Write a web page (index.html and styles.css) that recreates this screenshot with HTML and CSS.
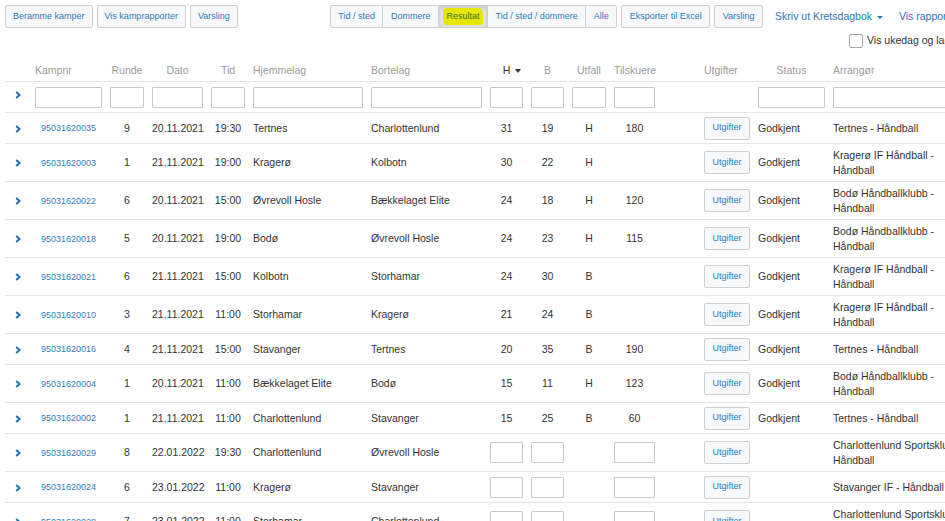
FILE: index.html
```html
<!DOCTYPE html>
<html lang="no">
<head>
<meta charset="utf-8">
<title>Kamper</title>
<link rel="stylesheet" href="styles.css">
</head>
<body>
<div class="page">
  <div class="toolbar">
    <div class="btn-row first">
      <button class="btn">Beramme kamper</button>
      <button class="btn">Vis kamprapporter</button>
      <button class="btn">Varsling</button>
    </div>
    <div class="btn-group">
      <button class="btn">Tid / sted</button>
      <button class="btn">Dommere</button>
      <button class="btn active"><span class="hl">Resultat</span></button>
      <button class="btn">Tid / sted / dommere</button>
      <button class="btn">Alle</button>
    </div>
    <div class="btn-row">
      <button class="btn">Eksporter til Excel</button>
      <button class="btn">Varsling</button>
    </div>
    <a class="nav-link" href="#">Skriv ut Kretsdagbok <span class="caret"></span></a>
    <a class="nav-link second" href="#">Vis rapporter</a>
  </div>
  <div class="options">
    <label class="check"><span class="box"></span>Vis ukedag og lagnavn</label>
  </div>

  <table class="grid">
    <colgroup>
      <col class="w-exp"><col class="w-nr"><col class="w-runde"><col class="w-dato"><col class="w-tid">
      <col class="w-hjem"><col class="w-bort"><col class="w-h"><col class="w-b"><col class="w-utfall">
      <col class="w-tilsk"><col class="w-spacer"><col class="w-utg"><col class="w-status"><col class="w-arr">
    </colgroup>
    <thead>
      <tr class="head">
        <th></th>
        <th class="l">Kampnr</th>
        <th>Runde</th>
        <th>Dato</th>
        <th>Tid</th>
        <th class="l">Hjemmelag</th>
        <th class="l">Bortelag</th>
        <th class="sorted">H<span class="sort-caret"></span></th>
        <th>B</th>
        <th>Utfall</th>
        <th>Tilskuere</th>
        <th></th>
        <th class="l">Utgifter</th>
        <th>Status</th>
        <th class="l">Arrangør</th>
      </tr>
      <tr class="filters">
        <td class="exp"><svg class="chev" viewBox="0 0 6 8" width="6" height="8"><polyline points="1.2,1 4.6,4 1.2,7" /></svg></td>
        <td><input class="field" type="text"></td>
        <td><input class="field" type="text"></td>
        <td><input class="field" type="text"></td>
        <td><input class="field" type="text"></td>
        <td><input class="field" type="text"></td>
        <td><input class="field" type="text"></td>
        <td><input class="field" type="text"></td>
        <td><input class="field" type="text"></td>
        <td><input class="field" type="text"></td>
        <td><input class="field" type="text"></td>
        <td></td>
        <td></td>
        <td><input class="field" type="text"></td>
        <td><input class="field" type="text"></td>
      </tr>
    </thead>
    <tbody>
      <tr>
        <td class="exp"><svg class="chev" viewBox="0 0 6 8" width="6" height="8"><polyline points="1.2,1 4.6,4 1.2,7" /></svg></td>
        <td class="c"><a class="nr" href="#">95031620035</a></td>
        <td class="c">9</td><td class="c">20.11.2021</td><td class="c">19:30</td>
        <td>Tertnes</td><td>Charlottenlund</td>
        <td class="c">31</td><td class="c">19</td><td class="c">H</td><td class="c">180</td><td></td>
        <td><button class="btn">Utgifter</button></td><td>Godkjent</td><td>Tertnes - Håndball</td>
      </tr>
      <tr>
        <td class="exp"><svg class="chev" viewBox="0 0 6 8" width="6" height="8"><polyline points="1.2,1 4.6,4 1.2,7" /></svg></td>
        <td class="c"><a class="nr" href="#">95031620003</a></td>
        <td class="c">1</td><td class="c">21.11.2021</td><td class="c">19:00</td>
        <td>Kragerø</td><td>Kolbotn</td>
        <td class="c">30</td><td class="c">22</td><td class="c">H</td><td class="c"></td><td></td>
        <td><button class="btn">Utgifter</button></td><td>Godkjent</td><td>Kragerø IF Håndball - Håndball</td>
      </tr>
      <tr>
        <td class="exp"><svg class="chev" viewBox="0 0 6 8" width="6" height="8"><polyline points="1.2,1 4.6,4 1.2,7" /></svg></td>
        <td class="c"><a class="nr" href="#">95031620022</a></td>
        <td class="c">6</td><td class="c">20.11.2021</td><td class="c">15:00</td>
        <td>Øvrevoll Hosle</td><td>Bækkelaget Elite</td>
        <td class="c">24</td><td class="c">18</td><td class="c">H</td><td class="c">120</td><td></td>
        <td><button class="btn">Utgifter</button></td><td>Godkjent</td><td>Bodø Håndballklubb - Håndball</td>
      </tr>
      <tr>
        <td class="exp"><svg class="chev" viewBox="0 0 6 8" width="6" height="8"><polyline points="1.2,1 4.6,4 1.2,7" /></svg></td>
        <td class="c"><a class="nr" href="#">95031620018</a></td>
        <td class="c">5</td><td class="c">20.11.2021</td><td class="c">19:00</td>
        <td>Bodø</td><td>Øvrevoll Hosle</td>
        <td class="c">24</td><td class="c">23</td><td class="c">H</td><td class="c">115</td><td></td>
        <td><button class="btn">Utgifter</button></td><td>Godkjent</td><td>Bodø Håndballklubb - Håndball</td>
      </tr>
      <tr>
        <td class="exp"><svg class="chev" viewBox="0 0 6 8" width="6" height="8"><polyline points="1.2,1 4.6,4 1.2,7" /></svg></td>
        <td class="c"><a class="nr" href="#">95031620021</a></td>
        <td class="c">6</td><td class="c">21.11.2021</td><td class="c">15:00</td>
        <td>Kolbotn</td><td>Storhamar</td>
        <td class="c">24</td><td class="c">30</td><td class="c">B</td><td class="c"></td><td></td>
        <td><button class="btn">Utgifter</button></td><td>Godkjent</td><td>Kragerø IF Håndball - Håndball</td>
      </tr>
      <tr>
        <td class="exp"><svg class="chev" viewBox="0 0 6 8" width="6" height="8"><polyline points="1.2,1 4.6,4 1.2,7" /></svg></td>
        <td class="c"><a class="nr" href="#">95031620010</a></td>
        <td class="c">3</td><td class="c">21.11.2021</td><td class="c">11:00</td>
        <td>Storhamar</td><td>Kragerø</td>
        <td class="c">21</td><td class="c">24</td><td class="c">B</td><td class="c"></td><td></td>
        <td><button class="btn">Utgifter</button></td><td>Godkjent</td><td>Kragerø IF Håndball - Håndball</td>
      </tr>
      <tr>
        <td class="exp"><svg class="chev" viewBox="0 0 6 8" width="6" height="8"><polyline points="1.2,1 4.6,4 1.2,7" /></svg></td>
        <td class="c"><a class="nr" href="#">95031620016</a></td>
        <td class="c">4</td><td class="c">21.11.2021</td><td class="c">15:00</td>
        <td>Stavanger</td><td>Tertnes</td>
        <td class="c">20</td><td class="c">35</td><td class="c">B</td><td class="c">190</td><td></td>
        <td><button class="btn">Utgifter</button></td><td>Godkjent</td><td>Tertnes - Håndball</td>
      </tr>
      <tr>
        <td class="exp"><svg class="chev" viewBox="0 0 6 8" width="6" height="8"><polyline points="1.2,1 4.6,4 1.2,7" /></svg></td>
        <td class="c"><a class="nr" href="#">95031620004</a></td>
        <td class="c">1</td><td class="c">20.11.2021</td><td class="c">11:00</td>
        <td>Bækkelaget Elite</td><td>Bodø</td>
        <td class="c">15</td><td class="c">11</td><td class="c">H</td><td class="c">123</td><td></td>
        <td><button class="btn">Utgifter</button></td><td>Godkjent</td><td>Bodø Håndballklubb - Håndball</td>
      </tr>
      <tr>
        <td class="exp"><svg class="chev" viewBox="0 0 6 8" width="6" height="8"><polyline points="1.2,1 4.6,4 1.2,7" /></svg></td>
        <td class="c"><a class="nr" href="#">95031620002</a></td>
        <td class="c">1</td><td class="c">21.11.2021</td><td class="c">11:00</td>
        <td>Charlottenlund</td><td>Stavanger</td>
        <td class="c">15</td><td class="c">25</td><td class="c">B</td><td class="c">60</td><td></td>
        <td><button class="btn">Utgifter</button></td><td>Godkjent</td><td>Tertnes - Håndball</td>
      </tr>
      <tr>
        <td class="exp"><svg class="chev" viewBox="0 0 6 8" width="6" height="8"><polyline points="1.2,1 4.6,4 1.2,7" /></svg></td>
        <td class="c"><a class="nr" href="#">95031620029</a></td>
        <td class="c">8</td><td class="c">22.01.2022</td><td class="c">19:30</td>
        <td>Charlottenlund</td><td>Øvrevoll Hosle</td>
        <td><input class="field" type="text"></td><td><input class="field" type="text"></td><td></td><td><input class="field" type="text"></td><td></td>
        <td><button class="btn">Utgifter</button></td><td></td><td>Charlottenlund Sportsklubb - Håndball</td>
      </tr>
      <tr>
        <td class="exp"><svg class="chev" viewBox="0 0 6 8" width="6" height="8"><polyline points="1.2,1 4.6,4 1.2,7" /></svg></td>
        <td class="c"><a class="nr" href="#">95031620024</a></td>
        <td class="c">6</td><td class="c">23.01.2022</td><td class="c">11:00</td>
        <td>Kragerø</td><td>Stavanger</td>
        <td><input class="field" type="text"></td><td><input class="field" type="text"></td><td></td><td><input class="field" type="text"></td><td></td>
        <td><button class="btn">Utgifter</button></td><td></td><td>Stavanger IF - Håndball</td>
      </tr>
      <tr>
        <td class="exp"><svg class="chev" viewBox="0 0 6 8" width="6" height="8"><polyline points="1.2,1 4.6,4 1.2,7" /></svg></td>
        <td class="c"><a class="nr" href="#">95031620028</a></td>
        <td class="c">7</td><td class="c">23.01.2022</td><td class="c">11:00</td>
        <td>Storhamar</td><td>Charlottenlund</td>
        <td><input class="field" type="text"></td><td><input class="field" type="text"></td><td></td><td><input class="field" type="text"></td><td></td>
        <td><button class="btn">Utgifter</button></td><td></td><td>Charlottenlund Sportsklubb - Håndball</td>
      </tr>
    </tbody>
  </table>
</div>
</body>
</html>
```

FILE: styles.css
```css
html, body {
  margin: 0;
  padding: 0;
  overflow: hidden;
  background: #fff;
}

body {
  font-family: "Liberation Sans", Arial, sans-serif;
  font-size: 10.5px;
  line-height: 15px;
  color: #333;
}

.page {
  width: 1100px;
  padding: 5px 5px 0 5px;
}

/* ---------- toolbar ---------- */
.toolbar {
  display: flex;
  align-items: center;
  height: 23px;
}

.btn-row {
  display: flex;
  gap: 4px;
}

.btn {
  font-family: "Liberation Sans", Arial, sans-serif;
  font-size: 9px;
  line-height: 13.5px;
  padding: 3.75px 7.5px;
  border: 1px solid #cfcfcf;
  border-radius: 2px;
  background: #f6f8fa;
  color: #2c7bbb;
  cursor: pointer;
  white-space: nowrap;
}

.btn-row.first .btn {
  padding-left: 7px;
  padding-right: 7px;
}

.btn-group {
  display: flex;
  margin-left: 92px;
  margin-right: 4px;
}

.btn-group .btn {
  border-radius: 0;
  margin-left: -1px;
}

.btn-group .btn:first-child {
  margin-left: 0;
  border-radius: 2px 0 0 2px;
}

.btn-group .btn:last-child {
  border-radius: 0 2px 2px 0;
}

.btn.active {
  background: #e4e4e4;
  box-shadow: inset 0 2px 4px rgba(0, 0, 0, 0.13);
  padding-left: 4.5px;
  padding-right: 4.5px;
}

.hl {
  display: inline-block;
  background: #e6e60a;
  color: #3b7a12;
  padding: 2px 3px;
  margin: -2px 0;
  border-radius: 3px 5px 2px 4px;
}

.nav-link {
  font-size: 10.5px;
  color: #2d74b4;
  text-decoration: none;
  margin-left: 12px;
  white-space: nowrap;
}

.nav-link.second {
  margin-left: 16px;
}

.caret {
  display: inline-block;
  width: 0;
  height: 0;
  margin-left: 2px;
  vertical-align: middle;
  border-top: 3.5px solid #2d74b4;
  border-left: 3px solid transparent;
  border-right: 3px solid transparent;
}

/* ---------- options row ---------- */
.options {
  margin-top: 5px;
  padding-left: 844px;
  height: 15px;
}

.check {
  display: flex;
  align-items: center;
  white-space: nowrap;
  color: #333;
}

.box {
  display: inline-block;
  width: 12px;
  height: 12px;
  border: 1px solid #a9a9a9;
  border-radius: 2px;
  background: #fff;
  margin-right: 4px;
}

/* ---------- table ---------- */
.grid {
  margin-top: 11px;
  border-collapse: collapse;
  table-layout: fixed;
  width: 968px;
}

.w-exp { width: 26px; }
.w-nr { width: 75px; }
.w-runde { width: 42px; }
.w-dato { width: 59px; }
.w-tid { width: 42px; }
.w-hjem { width: 118px; }
.w-bort { width: 119px; }
.w-h { width: 41px; }
.w-b { width: 41px; }
.w-utfall { width: 42px; }
.w-tilsk { width: 49px; }
.w-spacer { width: 41px; }
.w-utg { width: 54px; }
.w-status { width: 75px; }
.w-arr { width: 144px; }

.grid th {
  font-weight: normal;
  color: #9a9a9a;
  text-align: center;
  padding: 3.5px 4px;
  white-space: nowrap;
  border-bottom: 1px solid #e3e3e3;
}

.grid th.l {
  text-align: left;
}

.grid th.sorted {
  color: #333;
  padding-left: 15px;
}

.sort-caret {
  display: inline-block;
  width: 0;
  height: 0;
  margin-left: 5px;
  vertical-align: middle;
  border-top: 4px solid #333;
  border-left: 3.5px solid transparent;
  border-right: 3.5px solid transparent;
}

.grid td {
  padding: 3.5px 4px;
  vertical-align: middle;
  border-bottom: 1px solid #e6e6e6;
}

.grid tr.filters td {
  padding-top: 4.5px;
  padding-bottom: 4.5px;
}

.grid td.c {
  text-align: center;
  white-space: nowrap;
}

.grid td.exp {
  text-align: center;
  padding-left: 2px;
  padding-right: 2px;
}

.filters td.exp {
  vertical-align: top;
  padding-top: 8px;
}

.chev {
  display: inline-block;
  vertical-align: middle;
}

.chev polyline {
  fill: none;
  stroke: #1d6fab;
  stroke-width: 1.9;
  stroke-linejoin: miter;
  stroke-linecap: butt;
}

.field {
  display: block;
  box-sizing: border-box;
  width: 100%;
  height: 21px;
  margin: 0;
  padding: 0 4px;
  border: 1px solid #c9c9c9;
  border-radius: 1px;
  background: #fff;
  font-family: inherit;
  font-size: 10.5px;
}

.nr {
  font-size: 9px;
  color: #2f7ebd;
  text-decoration: none;
}

.grid td .btn {
  display: block;
}
```
